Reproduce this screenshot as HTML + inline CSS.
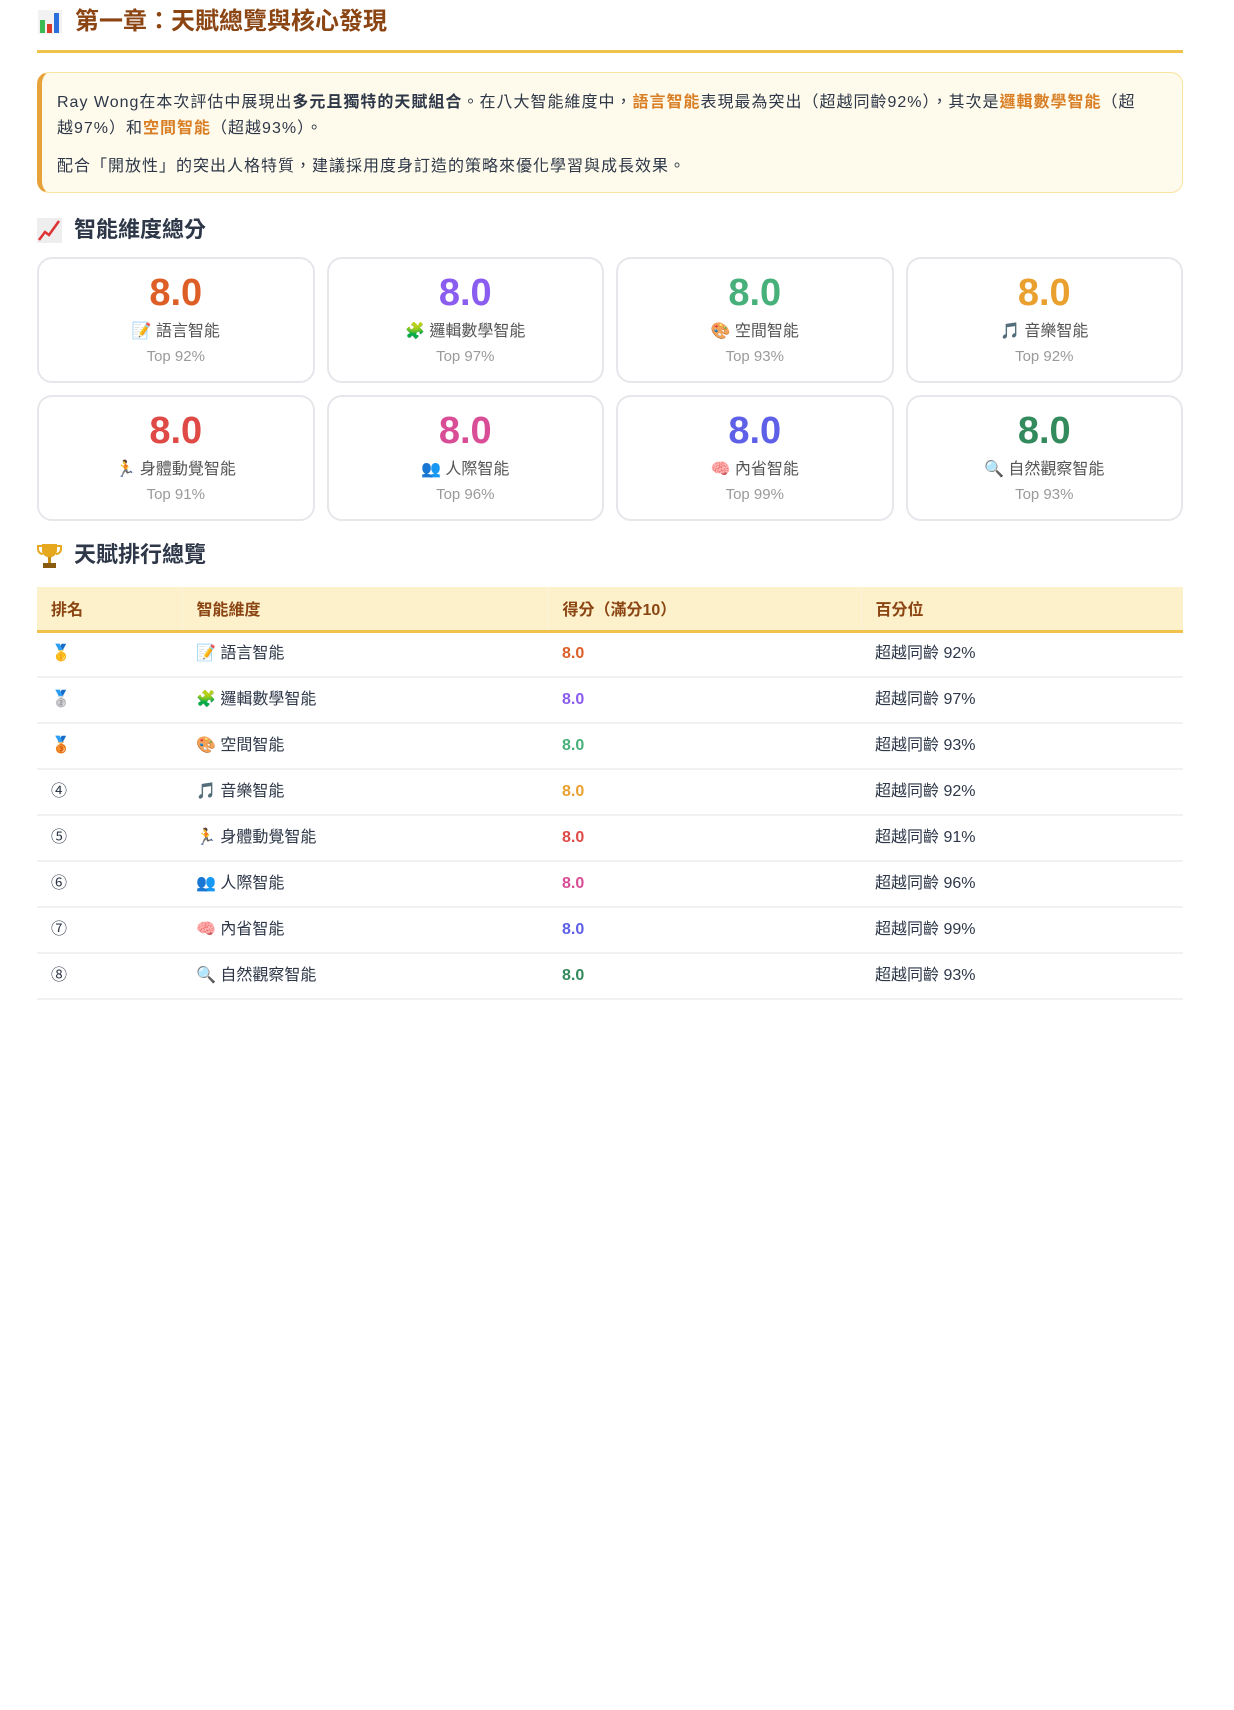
<!DOCTYPE html>
<html><head><meta charset="utf-8">
<style>
*{box-sizing:border-box}
body{margin:0;background:#fff;font-family:"Liberation Sans","Noto Sans CJK TC",sans-serif;color:#2d3748}
.wrap{position:absolute;left:37px;top:0;width:1146px}
h1{margin:0;height:53px;line-height:46px;font-size:24px;font-weight:bold;color:#8b4513;border-bottom:3px solid #f0c24b;display:flex;align-items:center;padding-bottom:7px}
.ic{display:inline-block;vertical-align:middle}
.callout{margin-top:19px;height:121px;background:#fffbec;border:1px solid #fbe3a0;border-left:5px solid #e8a23a;border-radius:12px;padding:17px 10px 0 15px;font-size:16px;line-height:26px;color:#2d3748;letter-spacing:1px;white-space:nowrap}
.callout p{margin:0 0 12px}
.hl{color:#d97f26;font-weight:bold}
h2{margin:20px 0 0;height:34px;line-height:34px;font-size:22px;font-weight:bold;color:#2d3748;display:flex;align-items:center}
h2 .ic{margin-right:12px}
.grid{display:grid;grid-template-columns:repeat(4,1fr);gap:12px;margin-top:10px}
.card{height:126px;border:2px solid #e6e7eb;border-radius:15px;text-align:center;padding-top:12px}
.num{font-size:38px;font-weight:bold;line-height:44px}
.lab{margin-top:5px;font-size:16px;line-height:24px;color:#555}
.top{margin-top:2px;font-size:15px;line-height:22px;color:#9a9a9a}
table{border-collapse:collapse;width:1146px;margin-top:15px;font-size:16px}
th{background:#fcf1cb;color:#8b4513;text-align:left;font-weight:bold;height:44px;padding:0 14px;border-bottom:3px solid #f0c24b;border-left:1px solid #fbf4dc;vertical-align:middle}
th:first-child{border-left:none}
td{height:46px;padding:0 14px;border-bottom:2px solid #f1f1f1;color:#2d3748;vertical-align:middle;line-height:22px}
td.s{font-weight:bold}
</style></head><body>
<div class="wrap">
<h1><svg class="ic" width="26" height="26" viewBox="0 0 26 26" style="margin-right:12px"><rect x="1" y="1" width="24" height="24" fill="#f2f2f2"/><rect x="3" y="11" width="5" height="13" fill="#3cba54"/><rect x="10" y="15" width="5" height="9" fill="#d93a2b"/><rect x="17" y="4" width="5" height="20" fill="#2a6fdb"/></svg>第一章：天賦總覽與核心發現</h1>
<div class="callout">
<p>Ray Wong在本次評估中展現出<b>多元且獨特的天賦組合</b>。在八大智能維度中，<span class="hl">語言智能</span>表現最為突出（超越同齡92%），其次是<span class="hl">邏輯數學智能</span>（超<br>越97%）和<span class="hl">空間智能</span>（超越93%）。</p>
<p>配合「開放性」的突出人格特質，建議採用度身訂造的策略來優化學習與成長效果。</p>
</div>
<h2><svg class="ic" width="25" height="25" viewBox="0 0 25 25"><rect x="0" y="0" width="25" height="25" fill="#eee"/><polyline points="2,22 8,14 12,17 22,3" fill="none" stroke="#d33" stroke-width="2.5"/></svg>智能維度總分</h2>
<div class="grid">
<div class="card"><div class="num" style="color:#dd5f27">8.0</div><div class="lab">📝 語言智能</div><div class="top">Top 92%</div></div>
<div class="card"><div class="num" style="color:#8a5cf0">8.0</div><div class="lab">🧩 邏輯數學智能</div><div class="top">Top 97%</div></div>
<div class="card"><div class="num" style="color:#48b07a">8.0</div><div class="lab">🎨 空間智能</div><div class="top">Top 93%</div></div>
<div class="card"><div class="num" style="color:#eaa02e">8.0</div><div class="lab">🎵 音樂智能</div><div class="top">Top 92%</div></div>
<div class="card"><div class="num" style="color:#df4a47">8.0</div><div class="lab">🏃 身體動覺智能</div><div class="top">Top 91%</div></div>
<div class="card"><div class="num" style="color:#d94d96">8.0</div><div class="lab">👥 人際智能</div><div class="top">Top 96%</div></div>
<div class="card"><div class="num" style="color:#5f60e8">8.0</div><div class="lab">🧠 內省智能</div><div class="top">Top 99%</div></div>
<div class="card"><div class="num" style="color:#338a5c">8.0</div><div class="lab">🔍 自然觀察智能</div><div class="top">Top 93%</div></div>
</div>
<h2 style="margin-top:17px"><svg class="ic" width="25" height="27" viewBox="0 0 25 27"><path d="M5 2h15v6a7.5 7.5 0 0 1-15 0z" fill="#e5a81e"/><path d="M5 4H1v3a5 5 0 0 0 5 5M20 4h4v3a5 5 0 0 1-5 5" fill="none" stroke="#e5a81e" stroke-width="2"/><rect x="11" y="15" width="3" height="6" fill="#c98a12"/><rect x="6" y="21" width="13" height="5" fill="#8a5a10"/></svg>天賦排行總覽</h2>
<table>
<tr><th style="width:145px">排名</th><th style="width:366px">智能維度</th><th style="width:313px">得分（滿分10）</th><th>百分位</th></tr>
<tr><td>🥇</td><td>📝 語言智能</td><td class="s" style="color:#dd5f27">8.0</td><td>超越同齡 92%</td></tr>
<tr><td>🥈</td><td>🧩 邏輯數學智能</td><td class="s" style="color:#8a5cf0">8.0</td><td>超越同齡 97%</td></tr>
<tr><td>🥉</td><td>🎨 空間智能</td><td class="s" style="color:#48b07a">8.0</td><td>超越同齡 93%</td></tr>
<tr><td>④</td><td>🎵 音樂智能</td><td class="s" style="color:#eaa02e">8.0</td><td>超越同齡 92%</td></tr>
<tr><td>⑤</td><td>🏃 身體動覺智能</td><td class="s" style="color:#df4a47">8.0</td><td>超越同齡 91%</td></tr>
<tr><td>⑥</td><td>👥 人際智能</td><td class="s" style="color:#d94d96">8.0</td><td>超越同齡 96%</td></tr>
<tr><td>⑦</td><td>🧠 內省智能</td><td class="s" style="color:#5f60e8">8.0</td><td>超越同齡 99%</td></tr>
<tr><td>⑧</td><td>🔍 自然觀察智能</td><td class="s" style="color:#338a5c">8.0</td><td>超越同齡 93%</td></tr>
</table>
</div>
</body></html>
